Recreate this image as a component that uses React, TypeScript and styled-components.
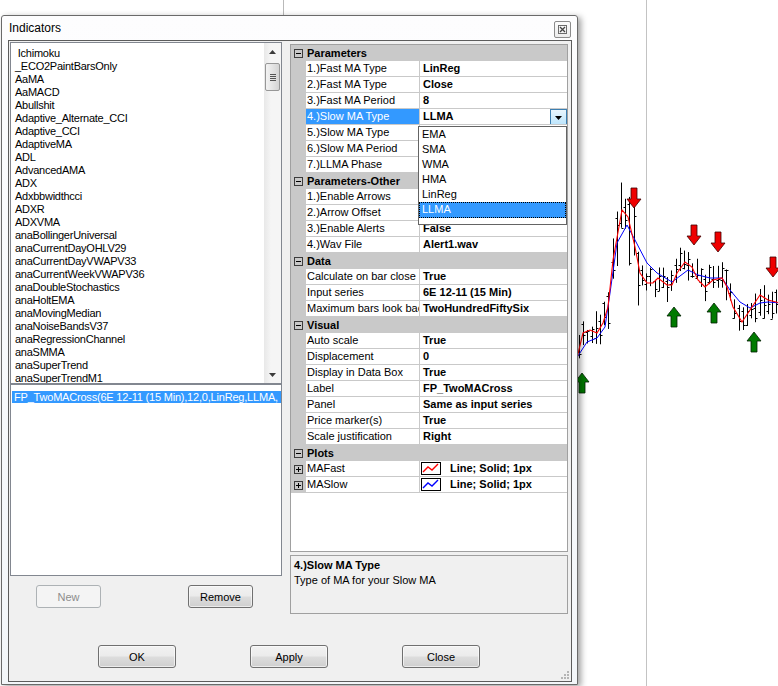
import React from "react";
import styled, { createGlobalStyle, css } from "styled-components";

const GlobalStyle = createGlobalStyle`
  html, body {
    margin: 0;
    padding: 0;
    background: #fff;
  }
  body {
    font-family: "Liberation Sans", Arial, sans-serif;
    font-size: 11px;
    color: #000;
  }
`;

// ---- data ----

const indicators = [
  " Ichimoku",
  "_ECO2PaintBarsOnly",
  "AaMA",
  "AaMACD",
  "Abullshit",
  "Adaptive_Alternate_CCI",
  "Adaptive_CCI",
  "AdaptiveMA",
  "ADL",
  "AdvancedAMA",
  "ADX",
  "Adxbbwidthcci",
  "ADXR",
  "ADXVMA",
  "anaBollingerUniversal",
  "anaCurrentDayOHLV29",
  "anaCurrentDayVWAPV33",
  "anaCurrentWeekVWAPV36",
  "anaDoubleStochastics",
  "anaHoltEMA",
  "anaMovingMedian",
  "anaNoiseBandsV37",
  "anaRegressionChannel",
  "anaSMMA",
  "anaSuperTrend",
  "anaSuperTrendM1",
];

type GridRow =
  | { kind: "cat"; label: string }
  | {
      kind: "prop";
      label: string;
      value?: string;
      selected?: boolean;
      plot?: string;
    };

const rows: GridRow[] = [
  { kind: "cat", label: "Parameters" },
  { kind: "prop", label: "1.)Fast MA Type", value: "LinReg" },
  { kind: "prop", label: "2.)Fast MA Type", value: "Close" },
  { kind: "prop", label: "3.)Fast MA Period", value: "8" },
  { kind: "prop", label: "4.)Slow MA Type", value: "LLMA", selected: true },
  { kind: "prop", label: "5.)Slow MA Type" },
  { kind: "prop", label: "6.)Slow MA Period" },
  { kind: "prop", label: "7.)LLMA Phase" },
  { kind: "cat", label: "Parameters-Other" },
  { kind: "prop", label: "1.)Enable Arrows" },
  { kind: "prop", label: "2.)Arrow Offset" },
  { kind: "prop", label: "3.)Enable Alerts", value: "False" },
  { kind: "prop", label: "4.)Wav File", value: "Alert1.wav" },
  { kind: "cat", label: "Data" },
  { kind: "prop", label: "Calculate on bar close", value: "True" },
  { kind: "prop", label: "Input series", value: "6E 12-11 (15 Min)" },
  { kind: "prop", label: "Maximum bars look back", value: "TwoHundredFiftySix" },
  { kind: "cat", label: "Visual" },
  { kind: "prop", label: "Auto scale", value: "True" },
  { kind: "prop", label: "Displacement", value: "0" },
  { kind: "prop", label: "Display in Data Box", value: "True" },
  { kind: "prop", label: "Label", value: "FP_TwoMACross" },
  { kind: "prop", label: "Panel", value: "Same as input series" },
  { kind: "prop", label: "Price marker(s)", value: "True" },
  { kind: "prop", label: "Scale justification", value: "Right" },
  { kind: "cat", label: "Plots" },
  { kind: "prop", label: "MAFast", value: "Line; Solid; 1px", plot: "#ff0000" },
  { kind: "prop", label: "MASlow", value: "Line; Solid; 1px", plot: "#0000ff" },
];

const maTypes = ["EMA", "SMA", "WMA", "HMA", "LinReg", "LLMA"];

// ---- chart data ----

type Pt = [number, number];

const RED: Pt[] = [
  [576, 362], [583, 333], [590, 330], [597, 333], [603, 323], [608, 307],
  [613, 260], [622, 210], [628, 217], [635, 247], [640, 273], [647, 283],
  [653, 283], [658, 278], [667, 285], [672, 285], [677, 273], [685, 262],
  [692, 267], [698, 280], [705, 287], [713, 280], [722, 278], [727, 287],
  [733, 307], [742, 322], [750, 310], [760, 295], [768, 300], [780, 303],
];

const BLUE: Pt[] = [
  [576, 359], [587, 342], [597, 338], [605, 327], [610, 293], [617, 243],
  [627, 225], [635, 240], [647, 263], [657, 273], [672, 282], [688, 270],
  [698, 275], [710, 278], [722, 278], [730, 290], [740, 302], [750, 308],
  [760, 303], [768, 302], [780, 303],
];

const interp = (pts: Pt[], x: number) => {
  for (let i = 1; i < pts.length; i++) {
    if (x <= pts[i][0]) {
      const [x0, y0] = pts[i - 1];
      const [x1, y1] = pts[i];
      return y0 + ((y1 - y0) * (x - x0)) / (x1 - x0);
    }
  }
  return pts[pts.length - 1][1];
};

const rng = (seed: number) => () => {
  seed = (seed * 16807) % 2147483647;
  return (seed - 1) / 2147483646;
};

const bars = (() => {
  const r = rng(17);
  const out: { x: number; hi: number; lo: number; o: number; c: number }[] = [];
  for (let x = 579; x < 778; x += 4.2) {
    const mid = interp(RED, x) + (r() - 0.5) * 12;
    const spike = x > 606 && x < 640 ? 30 : 0;
    const up = 6 + r() * 11 + spike * r();
    const dn = 6 + r() * 11 + spike * r();
    out.push({
      x: Math.round(x) + 0.5,
      hi: mid - up,
      lo: mid + dn,
      o: mid - up + r() * (up + dn),
      c: mid - up + r() * (up + dn),
    });
  }
  return out;
})();

const downArrows = [634, 694, 718, 773].map((x, i) => [x, [188, 225, 232, 257][i]]);
const upArrows = [582, 674, 714, 754].map((x, i) => [x, [373, 307, 303, 332][i]]);

const arrowDown = (x: number, y: number) =>
  `${x - 3},${y} ${x + 3},${y} ${x + 3},${y + 11} ${x + 7},${y + 11} ${x},${y + 20} ${x - 7},${y + 11} ${x - 3},${y + 11}`;
const arrowUp = (x: number, y: number) =>
  `${x},${y} ${x + 7},${y + 9} ${x + 3},${y + 9} ${x + 3},${y + 20} ${x - 3},${y + 20} ${x - 3},${y + 9} ${x - 7},${y + 9}`;

const toPath = (pts: Pt[]) => pts.map((p) => p.join(",")).join(" ");

// ---- layout ----

const Desktop = styled.div`
  position: relative;
  width: 778px;
  height: 686px;
  overflow: hidden;
  background: #fff;
`;

const ChartLayer = styled.svg`
  position: absolute;
  left: 0;
  top: 0;
`;

const Window = styled.div`
  position: absolute;
  left: 1px;
  top: 15px;
  width: 577px;
  height: 670px;
  box-sizing: border-box;
  border: 1px solid #6a6a6a;
  border-radius: 3px 3px 0 0;
  background: linear-gradient(#fdfdfe, #f3f6f9);
  box-shadow: 3px 2px 6px rgba(0, 0, 0, 0.38);
  padding: 0 5px 2px 6px;
  display: flex;
  flex-direction: column;
`;

const TitleBar = styled.div`
  height: 24px;
  flex: none;
  display: flex;
  align-items: center;
  justify-content: space-between;
`;

const Title = styled.span`
  font-size: 12px;
  padding-left: 1px;
  color: #000;
`;

const CloseBox = styled.div`
  width: 17px;
  height: 17px;
  box-sizing: border-box;
  margin: 2px 1px 0 0;
  border: 1px solid #8b8b8b;
  border-radius: 2px;
  background: linear-gradient(#fbfbfb, #ececec);
  display: flex;
  align-items: center;
  justify-content: center;
`;

const Client = styled.div`
  position: relative;
  flex: 1;
  border: 1px solid #5c5c5c;
  background: #f0f0f0;
  display: flex;
  flex-direction: column;
`;

const Split = styled.div`
  height: 573px;
  flex: none;
  box-sizing: border-box;
  padding-top: 1px;
  display: flex;
`;

const LeftPane = styled.div`
  width: 281px;
  flex: none;
  box-sizing: border-box;
  padding-left: 1px;
  display: flex;
  flex-direction: column;
`;

const ListFrame = styled.div<{ $h: number }>`
  width: 272px;
  height: ${(p) => p.$h}px;
  flex: none;
  box-sizing: border-box;
  border: 1px solid #828790;
  background: #fff;
  display: flex;
  overflow: hidden;
`;

const ListItems = styled.div`
  flex: 1;
  padding: 4px 0 0 4px;
  overflow: hidden;
  letter-spacing: -0.25px;
`;

const ListItem = styled.div`
  height: 13px;
  line-height: 13px;
  white-space: pre;
`;

const ScrollBar = styled.div`
  width: 17px;
  flex: none;
  position: relative;
  background: linear-gradient(90deg, #e8e8e8, #f5f5f5 40%, #f5f5f5);
  display: flex;
  flex-direction: column;
  justify-content: space-between;
  align-items: center;
`;

const ScrollArrow = styled.div`
  height: 17px;
  display: flex;
  align-items: center;
  justify-content: center;
`;

const Thumb = styled.div`
  position: absolute;
  left: 1px;
  right: 1px;
  top: 20px;
  height: 28px;
  box-sizing: border-box;
  border: 1px solid #979797;
  border-radius: 2px;
  background: linear-gradient(90deg, #f3f3f3, #e4e4e4 50%, #d4d4d4);
  display: flex;
  flex-direction: column;
  align-items: center;
  justify-content: center;
  gap: 1px;
`;

const Grip = styled.i`
  display: block;
  width: 6px;
  height: 1px;
  background: #555;
`;

const ConfiguredItems = styled.div`
  flex: 1;
  padding: 6px 0 0 1px;
  overflow: hidden;
`;

const SelectedItem = styled.div`
  height: 12px;
  line-height: 12px;
  padding-left: 2px;
  background: #3399ff;
  color: #fff;
  white-space: nowrap;
  overflow: hidden;
  letter-spacing: -0.2px;
`;

const PaneButtons = styled.div`
  display: flex;
  gap: 87px;
  margin: 9px 0 0 26px;
`;

const Button = styled.button<{ $w: number; $off?: boolean }>`
  width: ${(p) => p.$w}px;
  height: 23px;
  padding: 0;
  box-sizing: border-box;
  border: 1px solid #707070;
  border-radius: 3px;
  background: linear-gradient(#f2f2f2 0%, #ebebeb 48%, #dddddd 52%, #cfcfcf 100%);
  box-shadow: inset 0 0 0 1px rgba(255, 255, 255, 0.6);
  font-family: "Liberation Sans", Arial, sans-serif;
  font-size: 11px;
  color: #000;
  ${(p) =>
    p.$off &&
    css`
      border-color: #adb2b5;
      background: #f4f4f4;
      box-shadow: none;
      color: #8d8d8d;
    `}
`;

const RightPane = styled.div`
  width: 279px;
  flex: none;
  padding-top: 2px;
  display: flex;
  flex-direction: column;
`;

const PropGrid = styled.div`
  position: relative;
  width: 278px;
  height: 508px;
  box-sizing: border-box;
  border: 1px solid #a0a0a0;
  background: #fff;
`;

const Row = styled.div`
  display: flex;
  height: 16px;
`;

const MarginCell = styled.div`
  width: 15px;
  flex: none;
  background: #c9c9c9;
  display: flex;
  align-items: center;
  justify-content: center;
`;

const ExpandBox = styled.div`
  width: 9px;
  height: 9px;
  box-sizing: border-box;
  border: 1px solid #3c3c3c;
  position: relative;
  &::before {
    content: "";
    position: absolute;
    left: 1px;
    right: 1px;
    top: 3px;
    height: 1px;
    background: #000;
  }
`;

const PlusBox = styled(ExpandBox)`
  &::after {
    content: "";
    position: absolute;
    top: 1px;
    bottom: 1px;
    left: 3px;
    width: 1px;
    background: #000;
  }
`;

const CatCell = styled.div`
  flex: 1;
  background: #c9c9c9;
  font-weight: bold;
  line-height: 16px;
  padding-left: 1px;
`;

const LabelCell = styled.div<{ $sel?: boolean }>`
  width: 114px;
  flex: none;
  box-sizing: border-box;
  border-right: 1px solid #c9c9c9;
  border-bottom: 1px solid #c9c9c9;
  line-height: 15px;
  padding-left: 1px;
  white-space: nowrap;
  overflow: hidden;
  ${(p) =>
    p.$sel &&
    css`
      background: #3399ff;
      color: #fff;
    `}
`;

const ValueCell = styled.div`
  position: relative;
  flex: 1;
  border-bottom: 1px solid #c9c9c9;
  line-height: 15px;
  padding-left: 3px;
  font-weight: bold;
  white-space: nowrap;
  overflow: hidden;
  display: flex;
  align-items: center;
`;

const Swatch = styled.svg`
  flex: none;
  margin: 0 9px 0 -2px;
  border: 1px solid #000;
  background: #fff;
`;

const DropButton = styled.div`
  position: absolute;
  right: 0;
  top: 0;
  width: 17px;
  height: 16px;
  box-sizing: border-box;
  border: 1px solid #3c7fb1;
  background: linear-gradient(#eaf6fd, #bee6fd);
  display: flex;
  align-items: flex-end;
  justify-content: center;
  padding-bottom: 4px;
`;

const DropList = styled.div`
  position: absolute;
  left: 127px;
  top: 81px;
  width: 149px;
  height: 99px;
  box-sizing: border-box;
  border: 1px solid #646464;
  background: #fff;
`;

const DropItem = styled.div<{ $sel?: boolean }>`
  height: 15px;
  line-height: 15px;
  padding-left: 3px;
  box-sizing: border-box;
  ${(p) =>
    p.$sel &&
    css`
      height: 16px;
      background: #3399ff;
      color: #fff;
      outline: 1px dotted #000;
      outline-offset: -1px;
    `}
`;

const HelpBox = styled.div`
  margin-top: 3px;
  width: 278px;
  height: 59px;
  box-sizing: border-box;
  border: 1px solid #a0a0a0;
  background: #f0f0f0;
  padding: 2px 3px;
  line-height: 15px;
`;

const HelpTitle = styled.div`
  font-weight: bold;
`;

const Footer = styled.div`
  flex: 1;
  display: flex;
  align-items: flex-start;
  gap: 74px;
  padding: 31px 0 0 89px;
`;

const ResizeGrip = styled.svg`
  position: absolute;
  right: 2px;
  bottom: 2px;
`;

// ---- parts ----

function Chart() {
  return (
    <ChartLayer width={778} height={686}>
      <line x1={283.5} y1={0} x2={283.5} y2={30} stroke="#b9b9b9" />
      <line x1={646.5} y1={0} x2={646.5} y2={686} stroke="#c3c3c3" />
      {bars.map((b, i) => (
        <g key={i} stroke="#000" strokeWidth={1}>
          <line x1={b.x} y1={b.hi} x2={b.x} y2={b.lo} />
          <line x1={b.x - 2} y1={Math.round(b.o) + 0.5} x2={b.x} y2={Math.round(b.o) + 0.5} />
          <line x1={b.x} y1={Math.round(b.c) + 0.5} x2={b.x + 2} y2={Math.round(b.c) + 0.5} />
        </g>
      ))}
      <polyline points={toPath(BLUE)} fill="none" stroke="#0000ff" strokeWidth={1} />
      <polyline points={toPath(RED)} fill="none" stroke="#ff0000" strokeWidth={1.1} />
      {downArrows.map(([x, y], i) => (
        <polygon key={i} points={arrowDown(x, y)} fill="#ee0000" stroke="#400000" strokeWidth={0.8} />
      ))}
      {upArrows.map(([x, y], i) => (
        <polygon key={i} points={arrowUp(x, y)} fill="#007a00" stroke="#002000" strokeWidth={0.8} />
      ))}
    </ChartLayer>
  );
}

function IndicatorList() {
  return (
    <ListFrame $h={342}>
      <ListItems>
        {indicators.map((name) => (
          <ListItem key={name}>{name}</ListItem>
        ))}
      </ListItems>
      <ScrollBar>
        <ScrollArrow>
          <svg width="7" height="4">
            <polygon points="0,4 3.5,0 7,4" fill="#3b3b3b" />
          </svg>
        </ScrollArrow>
        <Thumb>
          <Grip />
          <Grip />
          <Grip />
          <Grip />
        </Thumb>
        <ScrollArrow>
          <svg width="7" height="4">
            <polygon points="0,0 7,0 3.5,4" fill="#3b3b3b" />
          </svg>
        </ScrollArrow>
      </ScrollBar>
    </ListFrame>
  );
}

function PlotSwatch({ color }: { color: string }) {
  return (
    <Swatch width={18} height={11}>
      <polyline points="1,9 6,4 10,7 16,1" fill="none" stroke={color} strokeWidth={1.4} />
    </Swatch>
  );
}

function PropertyGrid() {
  return (
    <PropGrid>
      {rows.map((r, i) =>
        r.kind === "cat" ? (
          <Row key={i}>
            <MarginCell>
              <ExpandBox />
            </MarginCell>
            <CatCell>{r.label}</CatCell>
          </Row>
        ) : (
          <Row key={i}>
            <MarginCell>{r.plot && <PlusBox />}</MarginCell>
            <LabelCell $sel={r.selected}>{r.label}</LabelCell>
            <ValueCell>
              {r.plot && <PlotSwatch color={r.plot} />}
              {r.value}
              {r.selected && (
                <DropButton>
                  <svg width="7" height="4">
                    <polygon points="0,0 7,0 3.5,4" fill="#000" />
                  </svg>
                </DropButton>
              )}
            </ValueCell>
          </Row>
        )
      )}
      <DropList>
        {maTypes.map((t) => (
          <DropItem key={t} $sel={t === "LLMA"}>
            {t}
          </DropItem>
        ))}
      </DropList>
    </PropGrid>
  );
}

export default function App() {
  return (
    <>
      <GlobalStyle />
      <Desktop>
        <Chart />
        <Window>
          <TitleBar>
            <Title>Indicators</Title>
            <CloseBox>
              <svg width="9" height="9" viewBox="0 0 9 9">
                <rect x="0.5" y="0.5" width="8" height="8" fill="none" stroke="#6b6b6b" />
                <path d="M2 2 L7 7 M7 2 L2 7" stroke="#444" strokeWidth="1.3" />
              </svg>
            </CloseBox>
          </TitleBar>
          <Client>
            <Split>
              <LeftPane>
                <IndicatorList />
                <ListFrame $h={192}>
                  <ConfiguredItems>
                    <SelectedItem>
                      FP_TwoMACross(6E 12-11 (15 Min),12,0,LinReg,LLMA,
                    </SelectedItem>
                  </ConfiguredItems>
                </ListFrame>
                <PaneButtons>
                  <Button $w={65} $off>
                    New
                  </Button>
                  <Button $w={65}>Remove</Button>
                </PaneButtons>
              </LeftPane>
              <RightPane>
                <PropertyGrid />
                <HelpBox>
                  <HelpTitle>4.)Slow MA Type</HelpTitle>
                  <div>Type of MA for your Slow MA</div>
                </HelpBox>
              </RightPane>
            </Split>
            <Footer>
              <Button $w={78}>OK</Button>
              <Button $w={78}>Apply</Button>
              <Button $w={78}>Close</Button>
            </Footer>
            <ResizeGrip width="8" height="8">
              {[
                [6, 0],
                [6, 3],
                [3, 3],
                [6, 6],
                [3, 6],
                [0, 6],
              ].map(([x, y], i) => (
                <rect key={i} x={x} y={y} width="2" height="2" fill="#b5b5b5" />
              ))}
            </ResizeGrip>
          </Client>
        </Window>
      </Desktop>
    </>
  );
}
